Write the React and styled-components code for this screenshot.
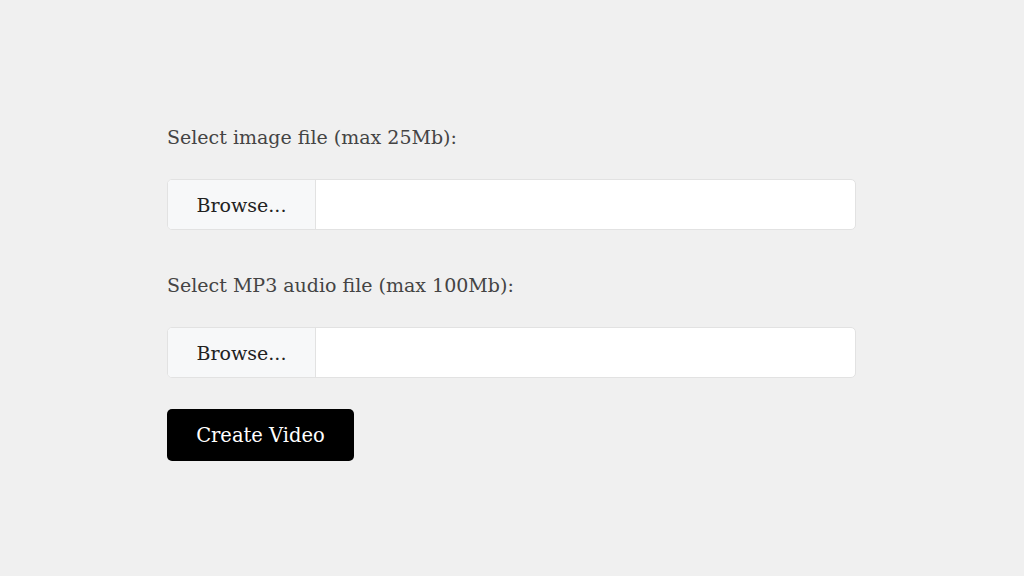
import React from "react";
import styled, { createGlobalStyle } from "styled-components";

const Global = createGlobalStyle`
  html, body { margin: 0; padding: 0; background: #f0f0f0; }
  body { font-family: "DejaVu Serif", "Liberation Serif", serif; }
`;

const Page = styled.div`
  width: 1024px;
  height: 576px;
  box-sizing: border-box;
  padding: 122px 0 0 167px;
`;

const Form = styled.form`
  width: 689px;
  display: flex;
  flex-direction: column;
`;

const Label = styled.label`
  display: block;
  font-size: 19px;
  line-height: 30px;
  color: #444;
  margin: ${(p) => p.$top || 0}px 0 27px;
`;

const FileGroup = styled.div`
  display: flex;
  height: 51px;
  box-sizing: border-box;
  border: 1px solid #e2e2e2;
  border-radius: 5px;
  background: #fff;
  overflow: hidden;
`;

const BrowseBtn = styled.span`
  width: 147px;
  flex: none;
  display: flex;
  align-items: center;
  justify-content: center;
  background: #f7f8f9;
  border-right: 1px solid #e2e2e2;
  font-size: 19px;
  color: #222;
`;

const FileName = styled.span`
  flex: 1;
`;

const Submit = styled.button`
  align-self: flex-start;
  margin-top: 31px;
  width: 187px;
  height: 52px;
  border: none;
  border-radius: 5px;
  background: #000;
  color: #fff;
  font-family: inherit;
  font-size: 19.5px;
  padding: 0;
`;

function FileInput() {
  return (
    <FileGroup>
      <BrowseBtn>Browse...</BrowseBtn>
      <FileName />
    </FileGroup>
  );
}

export default function App() {
  return (
    <>
      <Global />
      <Page>
        <Form onSubmit={(e) => e.preventDefault()}>
          <Label>Select image file (max 25Mb):</Label>
          <FileInput />
          <Label $top={40}>Select MP3 audio file (max 100Mb):</Label>
          <FileInput />
          <Submit type="submit">Create Video</Submit>
        </Form>
      </Page>
    </>
  );
}
